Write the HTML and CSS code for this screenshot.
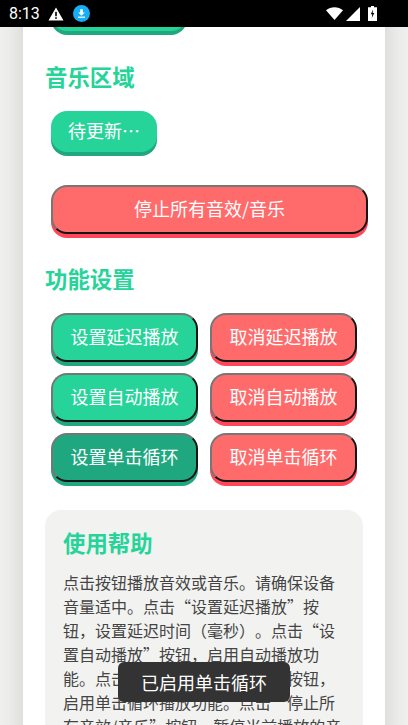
FILE: index.html
```html
<!DOCTYPE html>
<html lang="zh-CN">
<head>
  <meta charset="UTF-8">
  <meta name="viewport" content="width=device-width, initial-scale=1.0">
  <title>音效板</title>
  <link rel="stylesheet" href="styles.css">
</head>
<body>
  <div class="status-bar">
    <span class="clock">8:13</span>
    <svg class="icon-alert" width="16" height="14" viewBox="0 0 16 14">
      <path d="M8 0.5 L15.5 13.5 H0.5 Z" fill="#fff"/>
      <rect x="7.2" y="4.8" width="1.6" height="4.4" fill="#000"/>
      <rect x="7.2" y="10.2" width="1.6" height="1.6" fill="#000"/>
    </svg>
    <svg class="icon-download" width="17" height="17" viewBox="0 0 17 17">
      <circle cx="8.5" cy="8.5" r="8.5" fill="#18aef5"/>
      <path d="M7.2 4.2 H9.8 V7.6 H11.8 L8.5 10.8 L5.2 7.6 H7.2 Z" fill="#fff"/>
      <rect x="5" y="11.6" width="7" height="1.2" fill="#fff"/>
    </svg>
    <span class="status-right">
      <svg width="17" height="13" viewBox="0 0 17 13">
        <path d="M0 3.2 C4.8 -0.9 12.2 -0.9 17 3.2 L8.5 13 Z" fill="#fff"/>
      </svg>
      <svg class="icon-signal" width="14" height="14" viewBox="0 0 14 14">
        <path d="M14 0 V14 H0 Z" fill="#fff"/>
      </svg>
      <svg class="icon-battery" width="9" height="15" viewBox="0 0 9 15">
        <path d="M3 0 H6 V1.2 H9 V15 H0 V1.2 H3 Z" fill="#fff"/>
        <path d="M5 3.5 L2.8 8.3 H4.3 L3.8 12 L6.3 6.9 H4.7 Z" fill="#000"/>
      </svg>
    </span>
  </div>

  <main class="page">
    <div class="card">
      <div class="btn-row">
        <button class="btn btn-green btn-plain btn-cut"></button>
      </div>

      <h2 class="section-title">音乐区域</h2>
      <div class="btn-row">
        <button class="btn btn-green btn-plain">待更新…</button>
      </div>

      <button class="btn btn-red btn-stop">停止所有音效/音乐</button>

      <h2 class="section-title settings-title">功能设置</h2>
      <div class="settings-grid">
        <button class="btn btn-green">设置延迟播放</button>
        <button class="btn btn-red">取消延迟播放</button>
        <button class="btn btn-green">设置自动播放</button>
        <button class="btn btn-red">取消自动播放</button>
        <button class="btn btn-green btn-active">设置单击循环</button>
        <button class="btn btn-red">取消单击循环</button>
      </div>

      <section class="help">
        <h2 class="help-title">使用帮助</h2>
        <p>点击按钮播放音效或音乐。请确保设备音量适中。点击<span class="quote">“</span>设置延迟播放<span class="quote">”</span>按钮，设置延迟时间（毫秒）。点击<span class="quote">“</span>设置自动播放<span class="quote">”</span>按钮，启用自动播放功能。点击<span class="quote">“</span>设置单击循环播放<span class="quote">”</span>按钮，启用单击循环播放功能。点击<span class="quote">“</span>停止所有音效/音乐<span class="quote">”</span>按钮，暂停当前播放的音效或音乐。</p>
      </section>
    </div>
  </main>

  <div class="toast">已启用单击循环</div>
</body>
</html>
```

FILE: styles.css
```css
/* page frame */
html, body {
  height: 100%;
}

body {
  margin: 0;
  width: 408px;
  height: 725px;
  overflow: hidden;
  display: flex;
  flex-direction: column;
  position: relative;
  background-color: #eff0ee;
  font-family: "Noto Sans CJK SC", "Noto Sans", sans-serif;
}

/* status bar */
.status-bar {
  flex: none;
  height: 27px;
  background: #000000;
  display: flex;
  align-items: center;
  padding: 0 0 0 9px;
  position: relative;
  z-index: 2;
}

.clock {
  font-family: Roboto, sans-serif;
  font-size: 16px;
  color: #ffffff;
  width: 39px;
}

.icon-alert {
  margin-right: 9px;
}

.status-right {
  margin-left: auto;
  margin-right: 31px;
  display: flex;
  align-items: center;
  gap: 3px;
}

.icon-signal {
  margin-right: 5px;
}

/* main card */
.page {
  flex: 1;
  overflow: hidden;
}

.card {
  width: 318px;
  margin: -37px 0 0 23px;
  padding: 0 22px 40px;
  background: #ffffff;
  box-shadow: 0 0 22px rgba(0, 0, 0, 0.14);
}

.section-title {
  margin: 0;
  font-size: 22.4px;
  line-height: 32px;
  font-weight: 700;
  color: #26d49a;
}

.btn-row {
  display: flex;
  padding-left: 6px;
}

.section-title + .btn-row {
  margin-top: 19px;
}

.btn-row:first-child + .section-title {
  margin-top: 29px;
}

/* buttons */
.btn {
  font-family: inherit;
  font-size: 18px;
  line-height: 26px;
  color: #ffffff;
  height: 49px;
  padding: 0 0 3px;
  border-radius: 16px;
  border: 2px solid;
  border-color: #767676 #151515 #151515 #767676;
}

.btn-green {
  background-color: #26d49a;
  box-shadow: 0 4px 0 #1fa87f;
}

.btn-red {
  background-color: #ff6b6b;
  box-shadow: 0 4px 0 #ff4757;
}

.btn-plain {
  border: none;
  height: 41px;
  width: 106px;
}

.btn-cut {
  width: 136px;
}

.btn-active {
  background-color: #1fa87f;
}

.btn-stop {
  display: block;
  width: 317px;
  margin: 33px 0 0 6px;
}

.settings-title {
  margin-top: 28px;
}

.settings-grid {
  display: grid;
  grid-template-columns: 147px 147px;
  column-gap: 12px;
  row-gap: 11px;
  margin: 19px 0 0 6px;
}

/* help box */
.help {
  margin-top: 28px;
  padding: 14px 18px 20px;
  background: #f2f3f1;
  border-radius: 16px;
}

.help-title {
  margin: 0 0 10px;
  font-size: 22.4px;
  line-height: 36px;
  font-weight: 700;
  color: #26d49a;
}

.help p {
  margin: 0;
  font-size: 16px;
  line-height: 24px;
  color: #444444;
  text-spacing-trim: space-all;
}

.quote {
  font-variant-east-asian: full-width;
}

/* toast */
.toast {
  position: absolute;
  left: 118px;
  top: 662px;
  width: 172px;
  height: 40px;
  line-height: 40px;
  text-align: center;
  font-size: 18px;
  color: #ffffff;
  background: #333333;
  border-radius: 6px;
}
```
